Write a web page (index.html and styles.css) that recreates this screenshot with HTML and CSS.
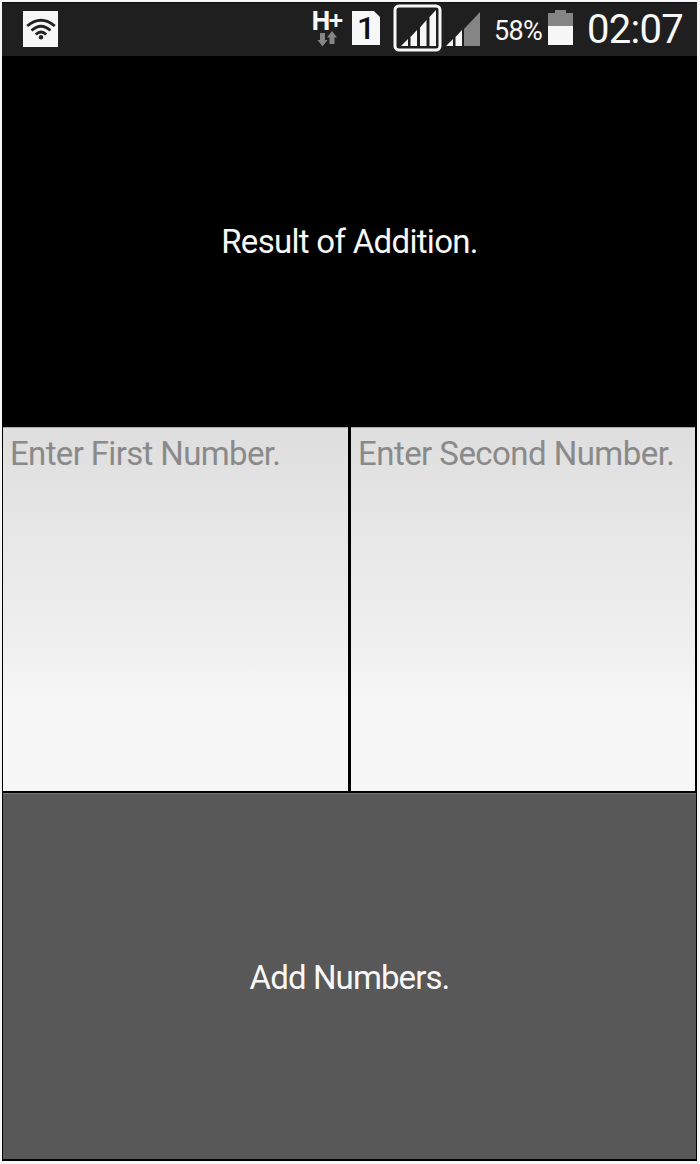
FILE: index.html
```html
<!DOCTYPE html>
<html lang="en">
<head>
<meta charset="utf-8">
<title>Addition</title>
<link rel="stylesheet" href="styles.css">
</head>
<body>
<main class="phone">
  <header class="status">
    <svg class="wifi" width="36" height="36" viewBox="0 0 36 36">
      <rect width="35" height="36" fill="#f7f7f7"/>
      <g fill="none" stroke="#222" stroke-width="2.8">
        <path d="M4.200 15Q18 3.500 31.800 15"/>
        <path d="M8.500 19.500Q18 11 27.500 19.500"/>
        <path d="M12.800 23.500Q18 18.500 23.200 23.500"/>
      </g>
      <circle cx="18" cy="26.200" r="2.200" fill="#222"/>
    </svg>
    <div class="network">
      <span class="network-type">H+</span>
      <svg class="arrows" width="20" height="16" viewBox="0 0 20 16" fill="#858585">
        <path d="M3 2h5v7h2.500L5.500 15.500 0.500 9H3z"/>
        <path d="M12.500 13V6.500H10L15 0l5 6.500h-2.500V13z"/>
      </svg>
    </div>
    <div class="sim">1</div>
    <svg class="signal" width="90" height="48" viewBox="0 0 90 48">
      <rect x="2" y="2" width="45" height="44" rx="4" fill="none" stroke="#f7f7f7" stroke-width="3"/>
      <g fill="#f7f7f7">
        <path d="M8 42L15 35v7z"/>
        <path d="M17.500 33L24 26v16h-6.500z"/>
        <path d="M27 23.500L33.500 16v26H27z"/>
        <path d="M36.500 13L43 6v36h-6.500z"/>
        <path d="M53 42L60 35v7z"/>
        <path d="M62.500 33L69 26v16h-6.500z"/>
      </g>
      <path d="M71 25L87 8v34H71z" fill="#858585"/>
    </svg>
    <span class="percent">58%</span>
    <svg class="battery" width="25" height="35" viewBox="0 0 25 35">
      <path d="M0 3h7V0h11v3h7v13H0z" fill="#858585"/>
      <path d="M0 16h25v19H0z" fill="#f7f7f7"/>
    </svg>
    <span class="clock">02:07</span>
  </header>
  <section class="result"><span class="result-text">Result of Addition.</span></section>
  <section class="inputs">
    <div class="field"><span class="first-hint">Enter First Number.</span></div>
    <div class="field"><span class="second-hint">Enter Second Number.</span></div>
  </section>
  <section class="add"><span class="add-text">Add Numbers.</span></section>
</main>
</body>
</html>
```
FILE: styles.css
```css
* { box-sizing: border-box; }
body {
  margin: 0;
  height: 1164px;
  padding: 2px 3px 3px 2px;
  background: #f7f7f7;
  font-family: Roboto, "Liberation Sans", sans-serif;
}
.phone {
  display: grid;
  grid-template-rows: 54px 370px 366px 1fr;
  height: 1159px;
  background: #000;
}
.status {
  display: flex;
  align-items: flex-start;
  background: #1f1f1f;
  border-top: 1px solid #111;
  color: #f7f7f7;
  white-space: nowrap;
}
.wifi { margin: 8px 0 0 21px; flex: none; }
.network {
  display: flex;
  flex-direction: column;
  width: 31px;
  margin: 6px 0 0 252px;
}
.network-type {
  height: 22px;
  font: bold 26px/22px "Open Sans", sans-serif;
  letter-spacing: -2.5px;
}
.arrows { margin-left: 6px; }
.sim {
  width: 28px;
  height: 34px;
  margin: 8px 0 0 10px;
  background: #f7f7f7;
  clip-path: polygon(0 0, 78% 0, 100% 18%, 100% 100%, 0 100%);
  color: #111;
  font-size: 32px;
  font-weight: 500;
  line-height: 35px;
  text-align: center;
}
.signal { margin: 1px 0 0 13px; flex: none; }
.percent {
  width: 48px;
  margin: 12px 0 0 11px;
  font-size: 27px;
  line-height: 32px;
  letter-spacing: -0.7px;
}
.battery { margin: 7px 0 0 6px; flex: none; }
.clock {
  margin: 3px 0 0 14px;
  font-size: 40px;
  line-height: 48px;
  letter-spacing: -0.7px;
}
.result, .add {
  display: flex;
  align-items: center;
  justify-content: center;
  padding-top: 2px;
  color: #f7f7f7;
  font-size: 33px;
  line-height: 38px;
}
.result-text { letter-spacing: -0.7px; }
.add-text { letter-spacing: -0.9px; }
.first-hint { letter-spacing: -0.65px; }
.second-hint { letter-spacing: -0.55px; }
.inputs {
  display: grid;
  grid-template-columns: 345px 344px;
  gap: 3px;
  padding: 1px 0 1px 1px;
}
.field {
  padding: 7px;
  background: linear-gradient(#dedede, #e6e6e6 25%, #efefef 58%, #f7f7f7 78%);
  border-top: 1px solid #aaa;
  color: #8a8a8a;
  font-size: 33px;
  line-height: 37px;
  white-space: nowrap;
}
.add {
  margin: 1px 1px 2px 1px;
  background: #585858;
  border-top: 1px solid #777;
}
```
